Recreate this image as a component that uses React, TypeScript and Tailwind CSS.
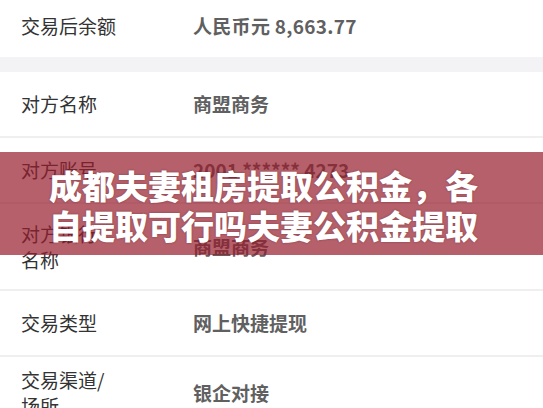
import React from "react";

const font = "font-['Noto_Sans_CJK_SC','Noto_Sans',sans-serif]";

function Row({
  label,
  value,
  h,
  border = true,
}: {
  label: React.ReactNode;
  value: React.ReactNode;
  h: string;
  border?: boolean;
}) {
  return (
    <div
      className={`flex items-center ${h} ${border ? "border-b-2 border-[#efefef]" : ""} bg-white`}
    >
      <div className="w-[193px] shrink-0 pl-[21px] text-[19px] leading-[26px] text-[#333333]">
        {label}
      </div>
      <div className="text-[19px] leading-[26px] font-bold text-[#606060]">{value}</div>
    </div>
  );
}

export default function App() {
  return (
    <div className={`relative w-[543px] h-[408px] overflow-hidden bg-white ${font}`}>
      <div className="flex flex-col">
        <div className="flex items-center h-[57px] pb-[6px] bg-white">
          <div className="w-[193px] shrink-0 pl-[21px] text-[19px] leading-[26px] text-[#333333]">
            交易后余额
          </div>
          <div className="text-[19px] leading-[26px] font-bold text-[#606060] tracking-[0.3px]">
            人民币元 8,663.77
          </div>
        </div>
        <div className="h-[15px] bg-[#f3f2f5]" />
        <Row h="h-[66px]" label="对方名称" value="商盟商务" />
        <Row h="h-[66px]" label="对方账号" value="2001 ****** 4273" />
        <Row
          h="h-[87px]"
          label={
            <>
              对方银行
              <br />
              名称
            </>
          }
          value="商盟商务"
        />
        <Row h="h-[66px]" label="交易类型" value="网上快捷提现" />
        <Row
          h="h-[72px]"
          border={false}
          label={
            <>
              交易渠道/
              <br />
              场所
            </>
          }
          value="银企对接"
        />
      </div>

      <div className="absolute left-0 right-0 top-[152px] h-[103px] bg-[rgba(149,29,44,0.7)] flex flex-col justify-center pl-[49px] pt-[2px]">
        <div className="text-[33px] leading-[40px] font-black text-white whitespace-nowrap [text-shadow:0_0_2px_rgba(60,0,10,0.45)]">
          成都夫妻租房提取公积金，各
          <br />
          自提取可行吗夫妻公积金提取
        </div>
      </div>
    </div>
  );
}
